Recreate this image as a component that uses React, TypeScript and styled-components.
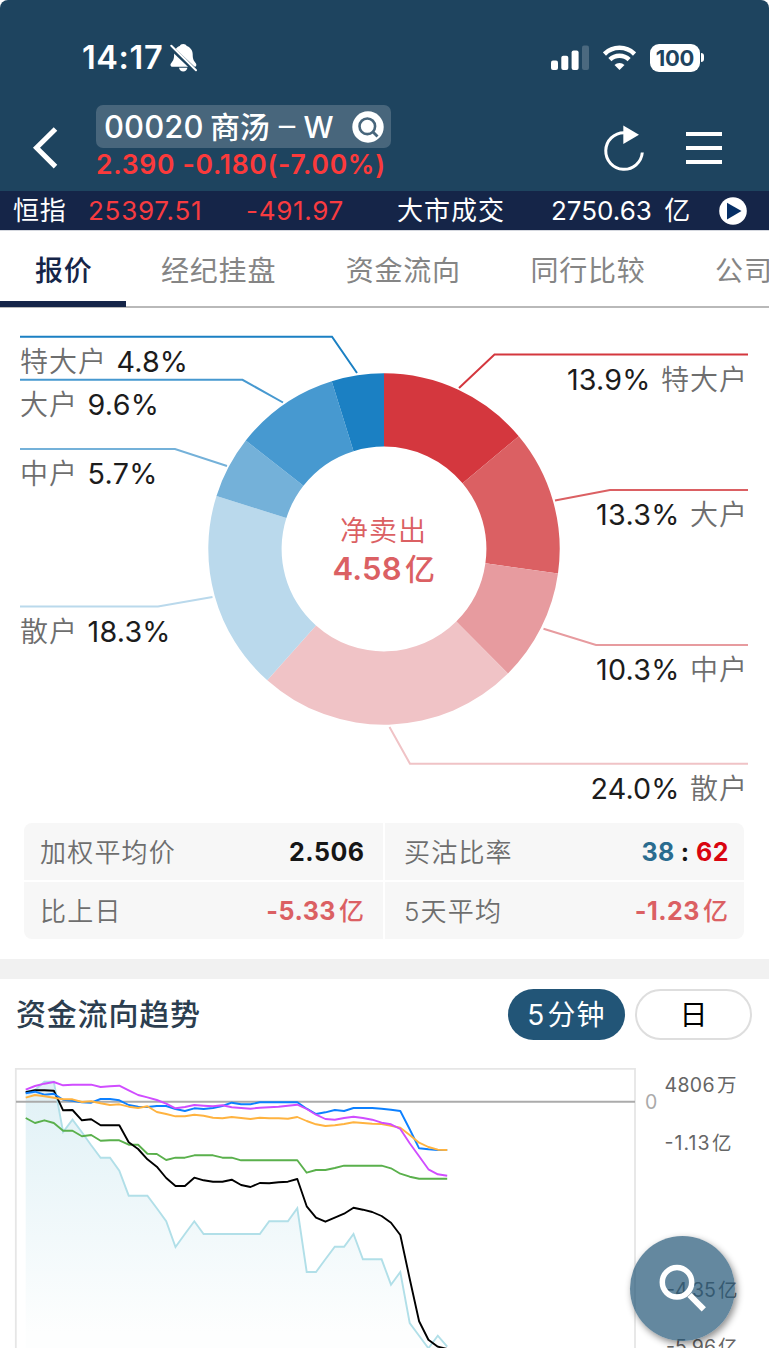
import React from 'react';
import styled, { createGlobalStyle } from 'styled-components';

const FONT = `Inter, "Noto Sans CJK SC", sans-serif`;

const GlobalStyle = createGlobalStyle`
  * { box-sizing: border-box; }
  body { margin: 0; background: #fff; font-family: ${FONT}; }
  svg { display: block; }
`;

const Screen = styled.div`
  position: relative;
  width: 769px;
  height: 1348px;
  overflow: hidden;
  background: #fff;
  white-space: nowrap;
`;

const Header = styled.header`
  height: 191px;
  background: #1e445f;
  border-radius: 8px 8px 0 0;
`;

const StatusBar = styled.div`
  display: flex;
  align-items: center;
  height: 105px;
  padding: 10px 65px 0 82px;
  color: #fff;
`;

const Clock = styled.span`
  width: 88px;
  font-size: 32.5px;
  font-weight: 560;
  line-height: 40px;
  letter-spacing: 0.6px;
`;

const StatusIcons = styled.div`
  display: flex;
  align-items: center;
  gap: 14px;
  margin-left: auto;
`;

const BatteryWrap = styled.div`
  display: flex;
  align-items: center;
  gap: 1px;
`;

const Battery = styled.div`
  width: 50px;
  height: 28px;
  border-radius: 9px;
  background: #fff;
  color: #1e445f;
  font-size: 22px;
  font-weight: 700;
  line-height: 28px;
  text-align: center;
  letter-spacing: -0.3px;
`;

const BatteryNub = styled.div`
  width: 3px;
  height: 9px;
  border-radius: 0 4px 4px 0;
  background: #fff;
`;

const TitleRow = styled.div`
  display: flex;
  height: 86px;
  padding-left: 32px;
`;

const BackIcon = styled.svg`
  margin: 21px 37px 0 0;
`;

const TitleBlock = styled.div`
  width: 508px;
`;

const StockPill = styled.div`
  display: flex;
  align-items: center;
  width: 295px;
  height: 43px;
  padding: 0 7px 0 8px;
  border-radius: 7px;
  background: #48667c;
  color: #fff;
  font-size: 31px;
  font-weight: 500;
  line-height: 43px;
`;

const StockCode = styled.span`
  width: 106px;
  letter-spacing: 0.1px;
`;

const StockName = styled.span`
  padding-top: 1px;
  font-size: 30px;
  line-height: 42px;
  letter-spacing: -0.2px;
`;

const NameDash = styled.span`
  margin: 0 5px 0 6px;
  font-size: 23px;
  font-weight: 700;
  line-height: 1;
  vertical-align: 3px;
`;

const PillSearch = styled.svg`
  margin-left: auto;
`;

const PriceLine = styled.div`
  font-size: 26.5px;
  font-weight: 560;
  line-height: 33px;
  color: #fb3a3b;
  letter-spacing: 0.7px;
`;

const RefreshIcon = styled.svg`
  margin: 19px 42px 0 0;
`;

const MenuIcon = styled.div`
  display: flex;
  flex-direction: column;
  gap: 10px;
  padding-top: 27px;
`;

const MenuBar = styled.i`
  width: 36px;
  height: 4px;
  background: #fff;
`;

const Ticker = styled.div`
  display: grid;
  grid-template-columns: 75px 158px 151px 154px 168px 28px;
  align-items: center;
  height: 39px;
  padding-left: 13px;
  background: #152548;
  color: #fff;
  font-size: 26px;
  line-height: 39px;
`;

const TickerItem = styled.span<{ $down?: boolean; $track?: number }>`
  color: ${(p) => (p.$down ? '#f83b40' : '#fff')};
  font-weight: 380;
  letter-spacing: ${(p) => p.$track ?? 0}px;
  word-spacing: 5px;
`;

const Tabs = styled.nav`
  display: flex;
  height: 78px;
  border-top: 1px solid #d5d8df;
  border-bottom: 2px solid #b9b9b9;
`;

const Tab = styled.div<{ $active?: boolean }>`
  flex: none;
  height: 76px;
  padding: 0 34.5px 0 35px;
  border-bottom: ${(p) => (p.$active ? '6px solid #152548' : 'none')};
  color: ${(p) => (p.$active ? '#152548' : '#858585')};
  font-size: 28px;
  font-weight: ${(p) => (p.$active ? 500 : 400)};
  line-height: 80px;
  letter-spacing: 0.8px;
  &:first-child { padding-right: 33.4px; }
`;

const ChartLabel = styled.text<{ $fill?: string }>`
  font-family: ${FONT};
  font-size: 28.7px;
  font-weight: 400;
  fill: ${(p) => p.$fill ?? '#1c1c1c'};
`;

const HolderName = styled(ChartLabel)`
  font-size: 28px;
  font-weight: 350;
  fill: #6e6e6e;
`;

const NetCaption = styled(ChartLabel)`
  font-size: 28px;
  font-weight: 350;
  fill: #db6063;
`;

const NetAmount = styled(ChartLabel)<{ $unit?: boolean }>`
  font-size: ${(p) => (p.$unit ? 30 : 31)}px;
  font-weight: ${(p) => (p.$unit ? 500 : 600)};
  fill: #db6063;
`;

const Stats = styled.section`
  display: grid;
  grid-template-columns: 359px 359px;
  grid-auto-rows: 57px;
  gap: 2px;
  width: 720px;
  margin: 0 24px 20px;
  border-radius: 8px;
  overflow: hidden;
`;

const StatCell = styled.div`
  display: flex;
  justify-content: space-between;
  align-items: center;
  padding: 2px 16px 0 16px;
  background: #f7f7f7;
  line-height: 55px;
  &:nth-child(odd) { padding-right: 19px; }
  &:nth-child(even) { padding-left: 19px; }
`;

const StatLabel = styled.span`
  font-size: 26px;
  font-weight: 350;
  color: #6e6e6e;
  letter-spacing: 1.2px;
`;

const StatValue = styled.span<{ $color?: string }>`
  font-size: 25px;
  font-weight: 700;
  color: ${(p) => p.$color ?? '#161616'};
  letter-spacing: 0.5px;
  margin-right: -0.5px;
`;

const Unit = styled.span`
  margin-left: 3px;
  font-weight: 500;
`;

const Divider = styled.div`
  height: 20px;
  background: #f1f1f1;
`;

const TrendHeader = styled.div`
  display: flex;
  align-items: center;
  height: 89px;
  padding: 0 17px 19px 16px;
`;

const TrendTitle = styled.h2`
  flex: 1;
  margin: 0;
  font-size: 30px;
  font-weight: 500;
  line-height: 46px;
  color: #2c3e50;
  letter-spacing: 0.8px;
`;

const PeriodButton = styled.button<{ $active?: boolean }>`
  width: 117px;
  height: 51px;
  margin-left: 10px;
  padding: ${(p) => (p.$active ? '1px 0 0' : '0')};
  border-radius: 26px;
  border: ${(p) => (p.$active ? 'none' : '2px solid #dedede')};
  background: ${(p) => (p.$active ? '#225577' : '#fff')};
  color: ${(p) => (p.$active ? '#fff' : '#000')};
  font-family: ${FONT};
  font-size: 28px;
  font-weight: 400;
  line-height: ${(p) => (p.$active ? 50 : 49)}px;
  letter-spacing: ${(p) => (p.$active ? 1.2 : 0)}px;
`;

const Count = styled.span`
  margin-right: 2px;
`;

const AxisLabel = styled.text<{ $light?: boolean }>`
  font-family: ${FONT};
  font-size: 19.5px;
  fill: ${(p) => (p.$light ? '#aaa' : '#666')};
`;

const SearchFab = styled.button`
  position: absolute;
  left: 630px;
  top: 1236px;
  width: 105px;
  height: 105px;
  padding: 0;
  border: 0;
  border-radius: 50%;
  background: rgba(34, 85, 118, 0.7);
  box-shadow: 2px 3px 7px rgba(0, 0, 0, 0.45);
`;

const CX = 384;
const CY = 241;
const R_OUT = 175.7;
const R_IN = 102.4;

const SLICES: [number, string][] = [
  [13.9, '#d4373e'],
  [13.3, '#db6063'],
  [10.3, '#e79b9f'],
  [24.0, '#f0c3c6'],
  [18.3, '#bad9ec'],
  [5.7, '#74b1d9'],
  [9.6, '#4799d0'],
  [4.8, '#1b80c3'],
];

const slicePaths = (() => {
  const total = SLICES.reduce((s, [v]) => s + v, 0);
  const at = (r: number, a: number) =>
    `${(CX + r * Math.sin(a)).toFixed(2)} ${(CY - r * Math.cos(a)).toFixed(2)}`;
  let angle = 0;
  return SLICES.map(([value, color]) => {
    const start = angle;
    angle += (value / total) * Math.PI * 2;
    return {
      color,
      d: `M${at(R_OUT, start)}A${R_OUT} ${R_OUT} 0 0 1 ${at(R_OUT, angle)}L${at(R_IN, angle)}A${R_IN} ${R_IN} 0 0 0 ${at(R_IN, start)}Z`,
    };
  });
})();

type Callout = {
  name: string;
  pct: string;
  color: string;
  points: string;
  y: number;
  nameX: number;
  nameW: number;
  pctX: number;
  pctW: number;
};

const CALLOUTS: Callout[] = [
  { name: '特大户', pct: '4.8%', color: '#1b80c3', points: '20,28.7 332,28.7 357,65', y: 64, nameX: 20, nameW: 86, pctX: 116.5, pctW: 71.5 },
  { name: '大户', pct: '9.6%', color: '#4799d0', points: '20,71.8 242.5,71.8 283,94.5', y: 107.4, nameX: 20, nameW: 57, pctX: 87.5, pctW: 71.5 },
  { name: '中户', pct: '5.7%', color: '#74b1d9', points: '20,141 175,141 227,158', y: 176.4, nameX: 20, nameW: 57, pctX: 87.5, pctW: 70 },
  { name: '散户', pct: '18.3%', color: '#bad9ec', points: '20,298.5 158,298.5 212.5,289', y: 334.4, nameX: 20, nameW: 57, pctX: 87.5, pctW: 83 },
  { name: '特大户', pct: '13.9%', color: '#d4373e', points: '459,80 494.5,46.5 748,46.5', y: 81.5, nameX: 661, nameW: 86, pctX: 567, pctW: 83.5 },
  { name: '大户', pct: '13.3%', color: '#db6063', points: '555,192.5 610,182 748,182', y: 217.4, nameX: 690, nameW: 57, pctX: 596, pctW: 83.5 },
  { name: '中户', pct: '10.3%', color: '#e79b9f', points: '543.5,320.8 596,337 748,337', y: 372, nameX: 690, nameW: 57, pctX: 596, pctW: 83.5 },
  { name: '散户', pct: '24.0%', color: '#f0c3c6', points: '389.5,419 410,455.8 748,455.8', y: 491, nameX: 690, nameW: 57, pctX: 590.5, pctW: 89 },
];

function FlowDonut() {
  return (
    <svg width="769" height="515" viewBox="0 0 769 515">
      {slicePaths.map((s) => (
        <path key={s.color} d={s.d} fill={s.color} />
      ))}
      {CALLOUTS.map((c) => (
        <g key={c.points}>
          <polyline points={c.points} fill="none" stroke={c.color} strokeWidth="2" />
          <HolderName x={c.nameX} y={c.y} textLength={c.nameW}>{c.name}</HolderName>
          <ChartLabel x={c.pctX} y={c.y} textLength={c.pctW}>{c.pct}</ChartLabel>
        </g>
      ))}
      <NetCaption x="340" y="232.5" textLength="86">净卖出</NetCaption>
      <NetAmount x="332.500" y="272" textLength="69">4.58</NetAmount>
      <NetAmount $unit x="405" y="272">亿</NetAmount>
    </svg>
  );
}

/* Samples are one per five minutes, in thirds of a pixel below the panel origin. */
const STEP = 28.1;
const PRICE = [125, 120, 95, 95, 246, 209, 247, 286, 323, 323, 362, 437, 437, 437, 475, 514, 591, 552, 514, 552, 552, 552, 552, 552, 552, 552, 514, 514, 514, 475, 666, 666, 628, 590, 590, 552, 628, 628, 628, 704, 666, 819, 857, 895, 857, 890];
const SERIES: { color: string; data: number[] }[] = [
  { color: '#5ab04c', data: [204, 219, 211, 219, 242, 242, 259, 255, 272, 271, 271, 284, 284, 311, 312, 330, 323, 323, 316, 316, 316, 323, 323, 331, 331, 331, 331, 331, 331, 331, 368, 360, 360, 354, 347, 347, 347, 347, 347, 355, 371, 380, 386, 386, 386, 386] },
  { color: '#000', data: [127, 121, 121, 122, 181, 180, 211, 208, 226, 226, 226, 277, 297, 328, 350, 384, 408, 408, 383, 391, 395, 395, 389, 405, 411, 399, 400, 397, 395, 387, 469, 503, 515, 503, 491, 473, 479, 486, 498, 518, 555, 686, 814, 869, 890, 897] },
  { color: '#0d80ff', data: [130, 125, 134, 131, 149, 152, 157, 158, 147, 147, 151, 165, 170, 171, 168, 168, 177, 183, 175, 177, 174, 168, 158, 163, 163, 157, 157, 157, 157, 157, 176, 192, 187, 180, 183, 174, 174, 174, 176, 179, 183, 238, 295, 298, 300, 300] },
  { color: '#ffb340', data: [143, 135, 139, 143, 148, 148, 156, 154, 160, 165, 163, 170, 174, 169, 186, 192, 199, 199, 194, 197, 203, 205, 201, 204, 207, 203, 205, 205, 206, 201, 213, 223, 228, 226, 222, 217, 219, 221, 222, 227, 233, 255, 278, 291, 299, 300] },
  { color: '#d04dff', data: [119, 108, 101, 96, 106, 104, 104, 104, 111, 109, 107, 121, 135, 142, 150, 161, 175, 171, 165, 167, 169, 166, 172, 174, 176, 173, 172, 170, 167, 164, 177, 194, 207, 209, 204, 200, 204, 209, 218, 223, 237, 280, 319, 358, 373, 377] },
];

const toPoints = (data: number[]) =>
  data.map((v, i) => `${((77 + STEP * i) / 3).toFixed(1)},${(v / 3 - 18).toFixed(1)}`).join(' ');

function TrendChart() {
  return (
    <svg width="769" height="280" viewBox="0 0 769 280">
      <defs>
        <linearGradient id="area" gradientUnits="userSpaceOnUse" x1="0" y1="14" x2="0" y2="265">
          <stop offset="0" stopColor="#e0f1f6" />
          <stop offset="1" stopColor="#fdfefe" />
        </linearGradient>
      </defs>
      <polygon points={`25.7,290 ${toPoints(PRICE)} 447,290`} fill="url(#area)" />
      <path d="M15.8 290V0.8H635V290" fill="none" stroke="#e6e6e6" strokeWidth="1.8" />
      <path d="M16 33.8H635" stroke="#ababab" strokeWidth="2" />
      <polyline points={toPoints(PRICE)} fill="none" stroke="#b1dfe8" strokeWidth="1.9" />
      {SERIES.map((s) => (
        <polyline key={s.color} points={toPoints(s.data)} fill="none" stroke={s.color} strokeWidth="1.9" strokeLinejoin="round" />
      ))}
      <AxisLabel $light x="645" y="41.3">0</AxisLabel>
      <AxisLabel x="664.5" y="23.8" textLength="50">4806</AxisLabel>
      <AxisLabel x="717" y="23.8">万</AxisLabel>
      <AxisLabel x="664.5" y="81.8" textLength="45">-1.13</AxisLabel>
      <AxisLabel x="712" y="81.8">亿</AxisLabel>
      <AxisLabel x="666" y="228.500">-4.35</AxisLabel>
      <AxisLabel x="718" y="228.500">亿</AxisLabel>
      <AxisLabel x="666" y="286">-5.96</AxisLabel>
      <AxisLabel x="718" y="286">亿</AxisLabel>
    </svg>
  );
}

const BellOff = () => (
  <svg width="28" height="30" viewBox="0 0 28 30">
    <path fill="#fff" d="M13.2 1c1.7 0 3 .9 3.600 2.100 3.600 1.300 5.900 4.300 5.900 8.200 0 4.500.8 6.300 2.700 8.400.9 1 1 1.700.9 2.600-.2 1-.9 1.500-2 1.500H2.500c-1.200 0-1.900-.6-2-1.500-.1-.9.100-1.600 1-2.600 1.900-2.100 2.600-3.900 2.600-8.400 0-3.900 2.100-6.900 5.600-8.200C10.200 1.900 11.500 1 13.200 1Z" />
    <path fill="#fff" d="M9 24.800h8.400c-.4 2.300-2 3.700-4.200 3.700s-3.800-1.400-4.200-3.700Z" />
    <path d="M.2 3.800 26.200 28.400" stroke="#1e445f" strokeWidth="4.600" />
    <path d="M1.300 2.800 26 27.200" stroke="#fff" strokeWidth="2" strokeLinecap="round" />
  </svg>
);

const Signal = () => (
  <svg width="38" height="26" viewBox="0 0 38 26" fill="#fff">
    <rect x="0" y="15.500" width="7" height="9.500" rx="2" />
    <rect x="10.300" y="10.700" width="7" height="14.300" rx="2" />
    <rect x="20.600" y="5.500" width="7" height="19.500" rx="2" />
    <rect x="31" y="0.500" width="7" height="24.500" rx="2" opacity=".2" />
  </svg>
);

const Wifi = () => (
  <svg width="33" height="26" viewBox="0 0 33 26" fill="none" stroke="#fff">
    <path d="M1.400 9a21.500 21.500 0 0 1 30.200 0" strokeWidth="4.600" />
    <path d="M6.900 14.700a13.700 13.700 0 0 1 19.200 0" strokeWidth="4.500" />
    <path d="M16.500 25 11.500 19.900a7.200 7.200 0 0 1 10 0Z" fill="#fff" stroke="none" />
  </svg>
);

export default function App() {
  return (
    <Screen>
      <GlobalStyle />
      <Header>
        <StatusBar>
          <Clock>14:17</Clock>
          <BellOff />
          <StatusIcons>
            <Signal />
            <Wifi />
            <BatteryWrap>
              <Battery>100</Battery>
              <BatteryNub />
            </BatteryWrap>
          </StatusIcons>
        </StatusBar>
        <TitleRow>
          <BackIcon width="27" height="43" viewBox="0 0 27 43">
            <path d="M23.500 3 4.500 21.800 23.500 40.600" fill="none" stroke="#fff" strokeWidth="5" />
          </BackIcon>
          <TitleBlock>
            <StockPill>
              <StockCode>00020</StockCode>
              <StockName>商汤<NameDash>－</NameDash>W</StockName>
              <PillSearch width="32" height="32" viewBox="0 0 32 32">
                <circle cx="16" cy="16" r="15.700" fill="#fff" />
                <circle cx="15.300" cy="15.300" r="7.800" fill="none" stroke="#48667c" strokeWidth="2.600" />
                <path d="m20.500 20.500 5 5" stroke="#48667c" strokeWidth="2.800" />
              </PillSearch>
            </StockPill>
            <PriceLine>2.390 -0.180(-7.00%)</PriceLine>
          </TitleBlock>
          <RefreshIcon width="40" height="48" viewBox="0 0 40 48">
            <path d="M20 8.700A18.300 18.300 0 1 0 38.300 28.500" fill="none" stroke="#fff" strokeWidth="3" />
            <path d="M19.300 1.500 35 10.800 19.300 20Z" fill="#fff" />
          </RefreshIcon>
          <MenuIcon>
            <MenuBar />
            <MenuBar />
            <MenuBar />
          </MenuIcon>
        </TitleRow>
      </Header>
      <Ticker>
        <TickerItem $track={0.7}>恒指</TickerItem>
        <TickerItem $down $track={0.75}>25397.51</TickerItem>
        <TickerItem $down $track={0.7}>-491.97</TickerItem>
        <TickerItem $track={1}>大市成交</TickerItem>
        <TickerItem $track={0}>2750.63 亿</TickerItem>
        <svg width="28" height="28" viewBox="0 0 28 28">
          <circle cx="14" cy="14" r="13.800" fill="#fff" />
          <path d="M8 5.800 22.500 14 8 22.500Z" fill="#062f66" />
        </svg>
      </Ticker>
      <Tabs>
        <Tab $active>报价</Tab>
        <Tab>经纪挂盘</Tab>
        <Tab>资金流向</Tab>
        <Tab>同行比较</Tab>
        <Tab>公司</Tab>
      </Tabs>
      <FlowDonut />
      <Stats>
        <StatCell>
          <StatLabel>加权平均价</StatLabel>
          <StatValue>2.506</StatValue>
        </StatCell>
        <StatCell>
          <StatLabel>买沽比率</StatLabel>
          <StatValue>
            <StatValue $color="#2a6c8f">38</StatValue> : <StatValue $color="#d9040f">62</StatValue>
          </StatValue>
        </StatCell>
        <StatCell>
          <StatLabel>比上日</StatLabel>
          <StatValue $color="#db6063">-5.33<Unit>亿</Unit></StatValue>
        </StatCell>
        <StatCell>
          <StatLabel>5天平均</StatLabel>
          <StatValue $color="#db6063">-1.23<Unit>亿</Unit></StatValue>
        </StatCell>
      </Stats>
      <Divider />
      <TrendHeader>
        <TrendTitle>资金流向趋势</TrendTitle>
        <PeriodButton $active><Count>5</Count>分钟</PeriodButton>
        <PeriodButton>日</PeriodButton>
      </TrendHeader>
      <TrendChart />
      <SearchFab aria-label="search">
        <svg width="105" height="105" viewBox="0 0 105 105" fill="none" stroke="#fff">
          <circle cx="47" cy="46.300" r="14.700" strokeWidth="5.500" />
          <path d="M59.500 59 73.800 73.300" strokeWidth="6" />
        </svg>
      </SearchFab>
    </Screen>
  );
}
